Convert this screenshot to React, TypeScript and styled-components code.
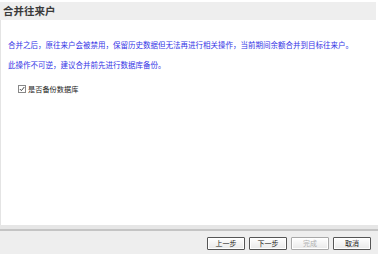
import styled, { createGlobalStyle } from 'styled-components';

const GlobalStyle = createGlobalStyle`
  html, body {
    margin: 0;
    padding: 0;
    background: #ffffff;
  }
  body {
    font-family: 'Noto Sans CJK SC', 'DejaVu Sans', sans-serif;
  }
`;

const Wizard = styled.div`
  width: 378px;
  height: 254px;
  display: flex;
  flex-direction: column;
  background: #ffffff;
  padding-top: 2px;
  box-sizing: border-box;
`;

const TitleBar = styled.div`
  height: 18px;
  background: #eeeeee;
  display: flex;
  align-items: center;
  padding-left: 3px;
  margin-right: 2px;
`;

const Title = styled.h1`
  margin: 0;
  font-size: 10.5px;
  font-weight: 600;
  color: #3a3a3a;
  line-height: 1;
`;

const Body = styled.div`
  flex: 1;
  border-left: 1px solid #e4e4e4;
  padding: 20px 0 0 7px;
  display: flex;
  flex-direction: column;
`;

const Notice = styled.p`
  margin: 0 0 11px;
  font-size: 7.5px;
  line-height: 9px;
  color: #3535e6;
  white-space: nowrap;
`;

const CheckRow = styled.label`
  display: flex;
  align-items: center;
  gap: 2px;
  margin: 4px 0 0 10px;
  font-size: 7.2px;
  color: #222222;
`;

const Box = styled.span`
  width: 6px;
  height: 6px;
  border: 1px solid #888888;
  display: flex;
  align-items: center;
  justify-content: center;
  background: #ffffff;
`;

const Footer = styled.div`
  height: 25px;
  background: #eeeeee;
  border-top: 4px solid #e6e6e6;
  display: flex;
  align-items: center;
  justify-content: flex-end;
  gap: 4px;
  padding-right: 7px;
  position: relative;

  &::before {
    content: '';
    position: absolute;
    left: 0;
    right: 0;
    top: 0;
    height: 2px;
    background: #c4c4c4;
  }
`;

const Button = styled.button<{ $disabled?: boolean }>`
  width: 38px;
  height: 13px;
  margin-top: 3px;
  padding: 0;
  font-family: 'Noto Sans CJK SC', sans-serif;
  font-size: 7px;
  line-height: 1;
  color: ${(p) => (p.$disabled ? '#b0b0b0' : '#222222')};
  background: linear-gradient(#ffffff, #e9e9e9);
  border: 1px solid ${(p) => (p.$disabled ? '#a8a8a8' : '#555555')};
  border-radius: 1px;
  box-shadow: inset 0 0 0 1px #ffffff;
`;

export default function App() {
  return (
    <>
      <GlobalStyle />
      <Wizard>
        <TitleBar>
          <Title>合并往来户</Title>
        </TitleBar>
        <Body>
          <Notice>合并之后，原往来户会被禁用，保留历史数据但无法再进行相关操作，当前期间余额合并到目标往来户。</Notice>
          <Notice>此操作不可逆，建议合并前先进行数据库备份。</Notice>
          <CheckRow>
            <Box>
              <svg width="6" height="6" viewBox="0 0 6 6">
                <path d="M0.8 3 L2.4 4.6 L5.3 1" fill="none" stroke="#333" strokeWidth="0.9" />
              </svg>
            </Box>
            是否备份数据库
          </CheckRow>
        </Body>
        <Footer>
          <Button>上一步</Button>
          <Button>下一步</Button>
          <Button $disabled>完成</Button>
          <Button>取消</Button>
        </Footer>
      </Wizard>
    </>
  );
}
